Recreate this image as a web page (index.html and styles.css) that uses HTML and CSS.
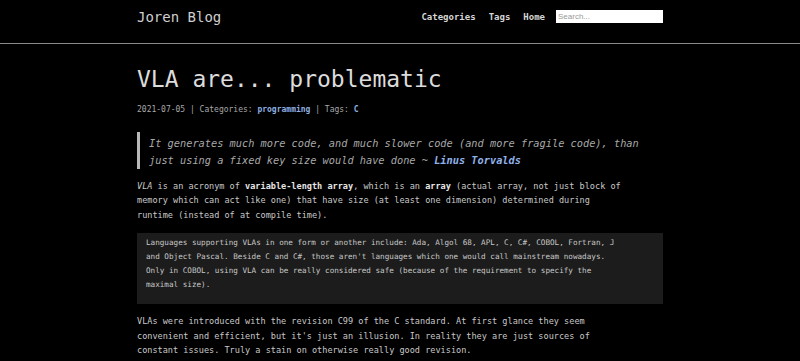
FILE: index.html
```html
<!DOCTYPE html>
<html>

<head>
    <title>VLA are... problematic - Joren Blog</title>
    <link rel="stylesheet" href="styles.css">
</head>

<body>
    <header class="site-header">
        <div class="wrap header-row">
            <a class="brand" href="#">Joren Blog</a>
            <nav class="nav">
                <a href="#">Categories</a>
                <a href="#">Tags</a>
                <a href="#">Home</a>
                <input type="text" class="search" placeholder="Search..."/>
            </nav>
        </div>
    </header>

    <main class="wrap post">
        <h1 class="post-title">VLA are... problematic</h1>
        <div class="meta">2021-07-05 | Categories: <a href="#">programming</a> | Tags: <a href="#">C</a></div>

        <blockquote class="quote">
            It generates much more code, and much slower code (and more fragile code), than<br/>
            just using a fixed key size would have done ~ <a href="#">Linus Torvalds</a>
        </blockquote>

        <p class="para"><em>VLA</em> is an acronym of <strong>variable-length array</strong>, which is an <strong>array</strong> (actual array, not just block of<br/>
            memory which can act like one) that have size (at least one dimension) determined during<br/>
            runtime (instead of at compile time).</p>

        <div class="note">Languages supporting VLAs in one form or another include: Ada, Algol 68, APL, C, C#, COBOL, Fortran, J
and Object Pascal. Beside C and C#, those aren't languages which one would call mainstream nowadays.
Only in COBOL, using VLA can be really considered safe (because of the requirement to specify the
maximal size).</div>

        <p class="para">VLAs were introduced with the revision C99 of the C standard. At first glance they seem<br/>
            convenient and efficient, but it's just an illusion. In reality they are just sources of<br/>
            constant issues. Truly a stain on otherwise really good revision.</p>
    </main>
</body>

</html>
```

FILE: styles.css
```css
body {
    margin: 0;
    background-color: #000;
    color: #c8c8c8;
    font-family: "DejaVu Sans Mono", "Liberation Mono", monospace;
}

a {
    text-decoration: none;
}

.wrap {
    width: 526px;
    margin: 0 auto;
}

.site-header {
    height: 43px;
    border-bottom: 1px solid #8a8a8a;
}

.header-row {
    display: flex;
    justify-content: space-between;
    align-items: center;
    height: 33px;
}

.brand {
    color: #cfcfcf;
    font-size: 14px;
}

.nav {
    display: flex;
    align-items: center;
    gap: 13px;
}

.nav a {
    color: #d6d6d6;
    font-size: 9px;
    font-weight: bold;
}

.search {
    width: 107px;
    height: 13px;
    box-sizing: border-box;
    margin-left: -2px;
    padding: 0 2px;
    border: none;
    background-color: #fff;
    font-family: "Liberation Sans", Arial, sans-serif;
    font-size: 8px;
}

.search::placeholder {
    color: #999;
}

.post-title {
    margin: 21px 0 0;
    font-size: 23px;
    font-weight: normal;
    line-height: 28px;
    color: #dcdcdc;
}

.meta {
    margin-top: 10px;
    font-size: 8px;
    line-height: 14.5px;
    color: #a8a8a8;
}

.meta a {
    color: #8eaee0;
    font-weight: bold;
}

.quote {
    margin: 14px 0 0;
    padding: 3px 0 0 9px;
    border-left: 3px solid #b8b8b8;
    font-size: 10.3px;
    line-height: 17px;
    font-style: italic;
    color: #a8a8a8;
}

.quote a {
    color: #90b2ea;
    font-weight: bold;
}

.para {
    margin: 10px 0 0;
    font-size: 8.55px;
    line-height: 14.5px;
}

.para strong {
    color: #e6e6e6;
}

.note {
    margin-top: 11px;
    padding: 3px 9px 12px;
    background-color: #1c1c1c;
    white-space: pre;
    font-size: 7.63px;
    line-height: 14px;
    color: #c8c8c8;
}
```
